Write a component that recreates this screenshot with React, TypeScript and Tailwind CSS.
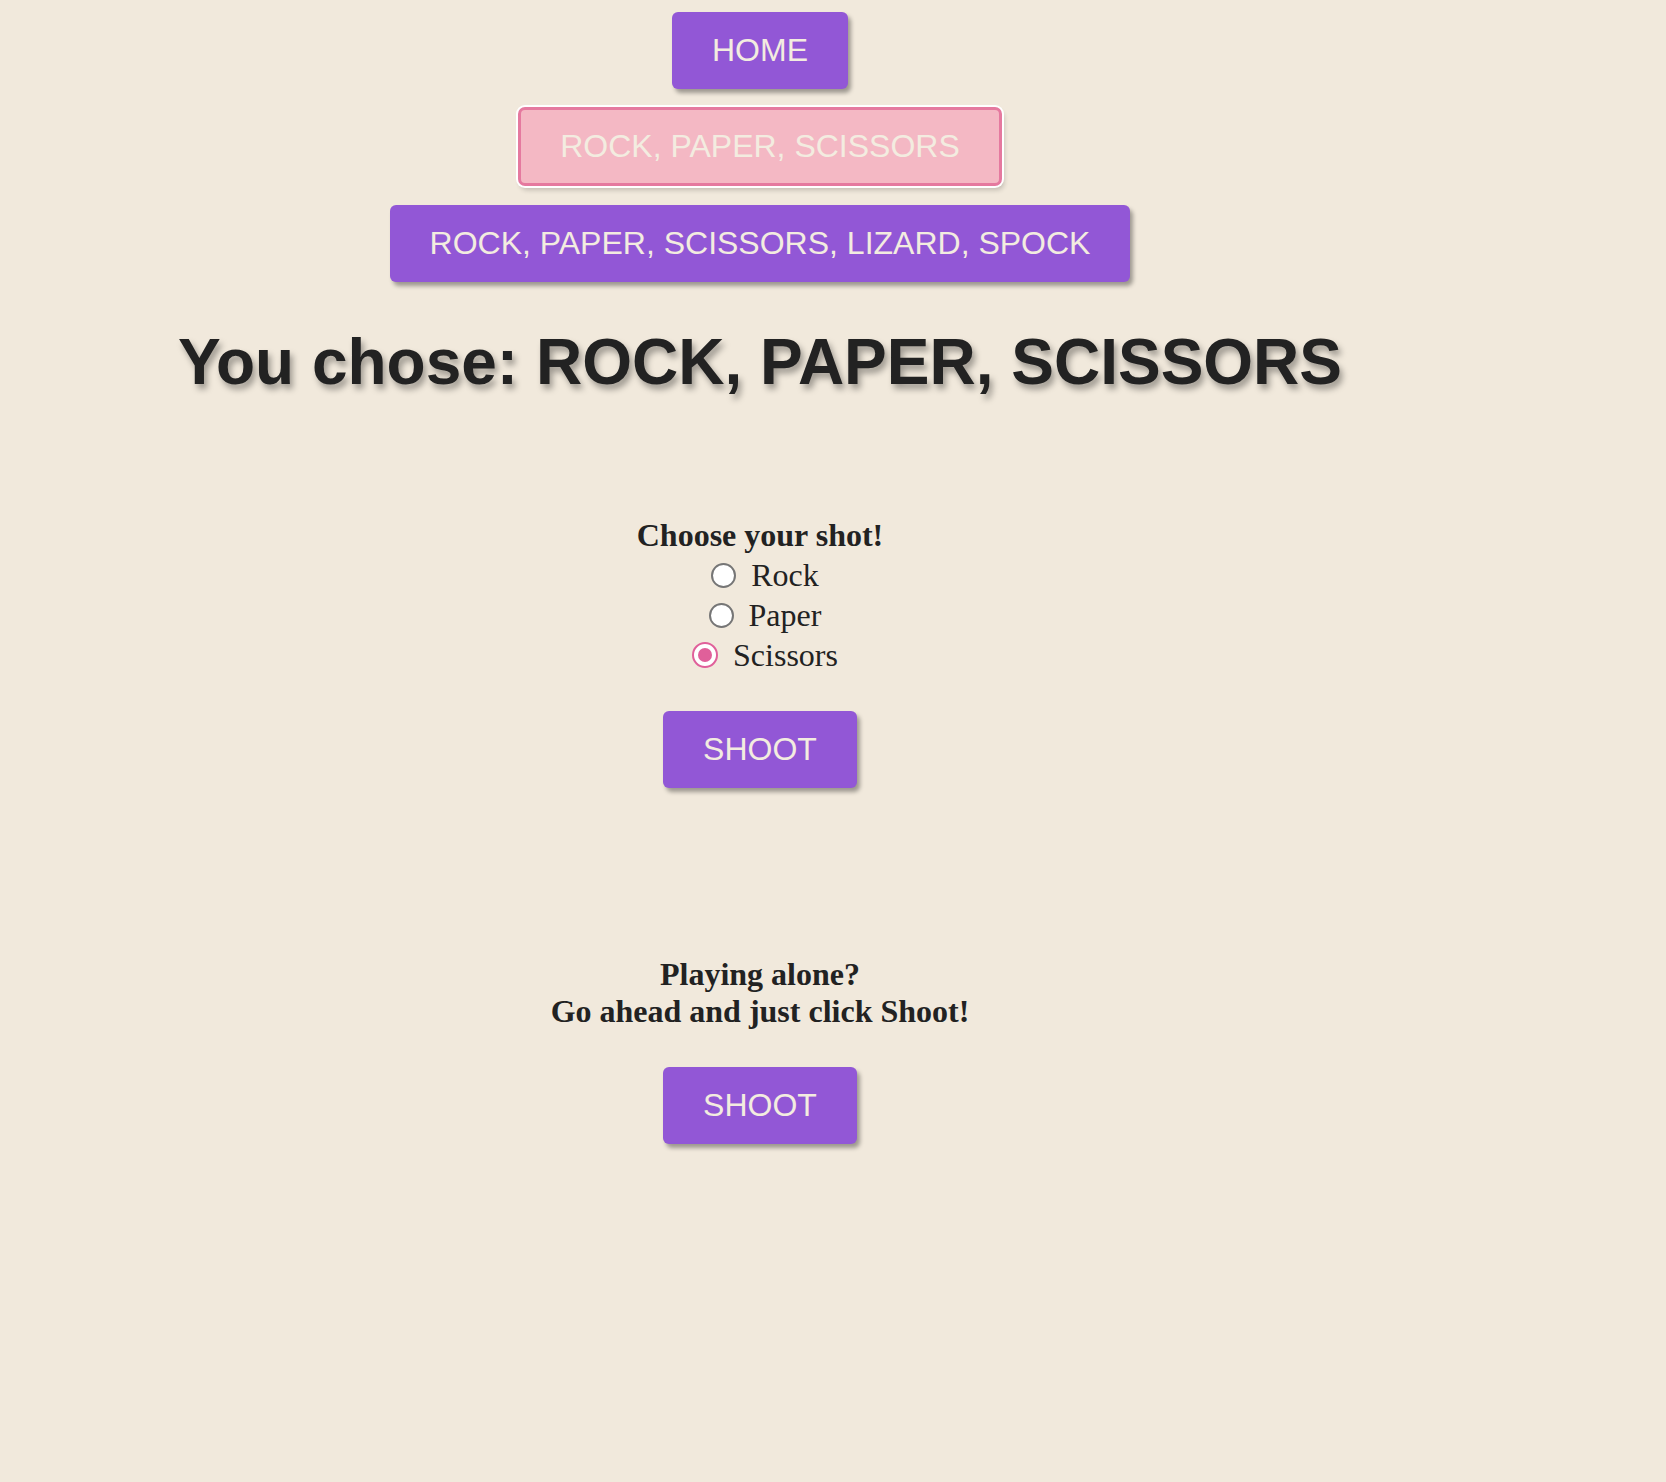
import React from "react";

const btn =
  "bg-[#9257d6] text-[#f3ece0] text-[32px] leading-[37px] px-[40px] py-[20px] rounded-[6px] shadow-[3px_4px_4px_rgba(0,0,0,0.35)] font-['Liberation_Sans',Arial,sans-serif]";

function Radio({ checked, label }: { checked?: boolean; label: string }) {
  return (
    <div className="flex items-center h-[40px] pl-[10px]">
      {checked ? (
        <span className="w-[26px] h-[26px] rounded-full border-2 border-[#e0609a] bg-white flex items-center justify-center">
          <span className="w-[14px] h-[14px] rounded-full bg-[#e0609a]" />
        </span>
      ) : (
        <span className="w-[25px] h-[25px] rounded-full border-2 border-[#767676] bg-white" />
      )}
      <span className="ml-[15px] text-[32px] leading-[40px] text-[#222]">{label}</span>
    </div>
  );
}

export default function App() {
  return (
    <div className="min-h-screen w-full bg-[#f1e9dc]">
      <div className="w-[1520px] flex flex-col items-center pb-[300px] font-['Liberation_Serif','Times_New_Roman',serif] text-[#222]">
        <button className={btn + " mt-[12px]"}>HOME</button>
        <button className="mt-[18px] bg-[#f4b8c4] text-[#f3ece0] text-[32px] leading-[37px] px-[39px] py-[18px] rounded-[7px] border-[3px] border-[#e5799f] shadow-[0_0_0_2px_#ffffff,2px_4px_5px_rgba(0,0,0,0.2)] font-['Liberation_Sans',Arial,sans-serif]">
          ROCK, PAPER, SCISSORS
        </button>
        <button className={btn + " mt-[19px]"}>ROCK, PAPER, SCISSORS, LIZARD, SPOCK</button>
        <h1 className="mt-[43px] text-[64px] leading-[74px] font-bold text-[#222] font-['Liberation_Sans',Arial,sans-serif] [text-shadow:3px_5px_6px_rgba(0,0,0,0.35)]">
          You chose: ROCK, PAPER, SCISSORS
        </h1>
        <div className="mt-[118px] flex flex-col items-center">
          <div className="text-[32px] leading-[37px] font-bold">Choose your shot!</div>
          <div className="mt-[1px] flex flex-col items-center">
            <Radio label="Rock" />
            <Radio label="Paper" />
            <Radio label="Scissors" checked />
          </div>
          <button className={btn + " mt-[36px]"}>SHOOT</button>
        </div>
        <div className="mt-[168px] flex flex-col items-center">
          <div className="text-[32px] leading-[37px] font-bold text-center">
            Playing alone?
            <br />
            Go ahead and just click Shoot!
          </div>
          <button className={btn + " mt-[37px]"}>SHOOT</button>
        </div>
      </div>
    </div>
  );
}
